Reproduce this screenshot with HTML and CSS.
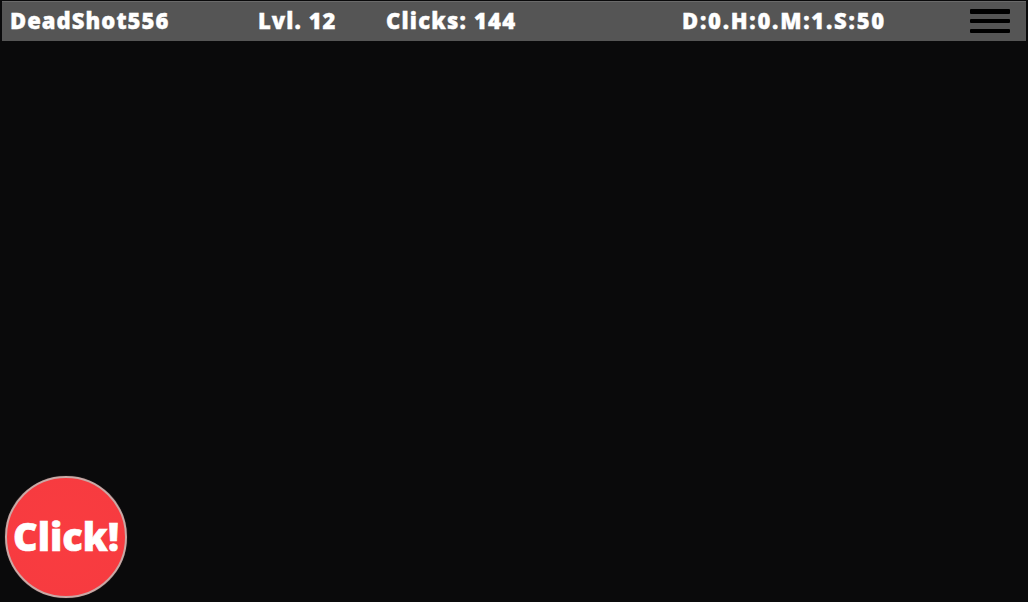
FILE: index.html
```html
<!DOCTYPE html>
<html lang="en">
<head>
<meta charset="utf-8">
<title>Clicker</title>
<link rel="stylesheet" href="styles.css">
</head>
<body>
<div class="app">
  <header class="bar">
    <span class="stat stat-name">DeadShot556</span>
    <span class="stat stat-level">Lvl. 12</span>
    <span class="stat stat-clicks">Clicks: 144</span>
    <span class="stat stat-time">D:0.H:0.M:1.S:50</span>
    <div class="menu"><i></i><i></i><i></i></div>
  </header>
  <main class="field">
    <button class="click" type="button"><span class="click-label">Click!</span></button>
  </main>
</div>
</body>
</html>
```
FILE: styles.css
```css
* { box-sizing: border-box; }
html, body { margin: 0; height: 100%; background: #0a0a0b; }
.app {
  width: 1028px;
  height: 602px;
  display: flex;
  flex-direction: column;
  padding: 1px 2px 0;
  overflow: hidden;
  font-family: "Open Sans", "Noto Sans", sans-serif;
}
.bar {
  height: 40px;
  flex: none;
  display: flex;
  align-items: center;
  padding-left: 8px;
  background: #555;
  box-shadow: inset 0 1px 0 #6a6a6a;
}
.stat {
  color: #fff;
  font-size: 22px;
  font-weight: 800;
  line-height: 40px;
  white-space: nowrap;
  flex: none;
  letter-spacing: 1.05px;
  -webkit-text-stroke: 0.4px #fff;
  padding-bottom: 2px;
}
.stat-name { width: 248px; }
.stat-level { width: 128px; }
.stat-clicks { width: 296px; letter-spacing: 1.2px; }
.stat-time { width: 288px; letter-spacing: 1.75px; }
.menu {
  width: 40px;
  height: 24px;
  flex: none;
  display: flex;
  flex-direction: column;
  justify-content: space-between;
}
.menu i {
  display: block;
  height: 4.5px;
  background: #000;
  border-radius: 1px;
}
.field {
  flex: 1;
  display: flex;
  align-items: flex-end;
  padding: 0 0 4px 3px;
}
.click {
  width: 122px;
  height: 122px;
  padding: 0 0 3px;
  border: 2px solid #c9a9a6;
  border-radius: 50%;
  background: radial-gradient(circle at 50% 50%, #f93c40 0%, #f73b40 80%, #ea363b 93%, #b92a2e 100%);
  box-shadow: 0 0 1px #8a6a68;
  color: #fff;
  font-family: inherit;
  font-size: 38px;
  font-weight: 800;
  line-height: 1;
}
.click-label { -webkit-text-stroke: 0.6px #fff; }
```
